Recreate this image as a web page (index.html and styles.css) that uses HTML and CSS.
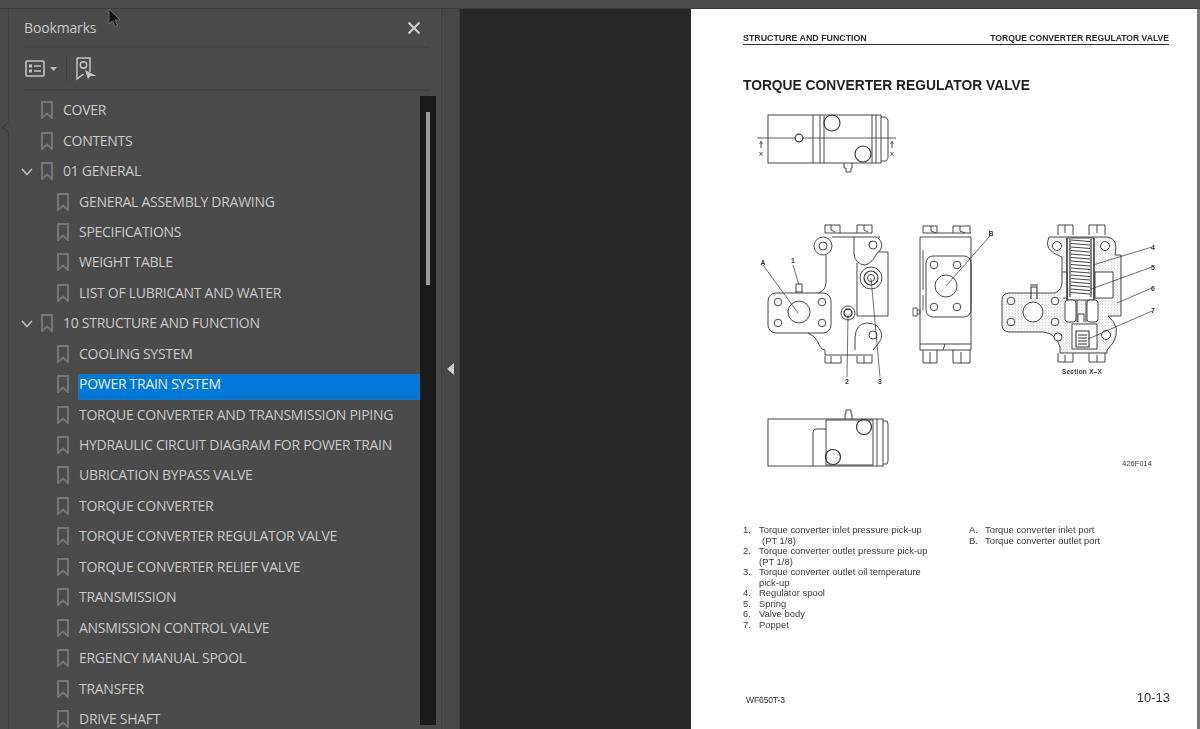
FILE: index.html
```html
<!DOCTYPE html>
<html lang="en">
<head>
<meta charset="utf-8">
<title>Bookmarks</title>
<link rel="stylesheet" href="styles.css">
</head>
<body>
<svg class="defs" width="0" height="0" aria-hidden="true">
  <symbol id="bm" viewBox="0 0 12 18"><path d="M1 1H11V17L6 12.6L1 17Z" fill="none" stroke="currentColor" stroke-width="2"/></symbol>
  <symbol id="chev" viewBox="0 0 12 8"><path d="M1 1L6 6.5L11 1" fill="none" stroke="currentColor" stroke-width="1.5"/></symbol>
</svg>
<div class="topbar"></div>
<div class="main">
  <div class="strip"><span class="notch"></span></div>
  <aside class="panel">
    <header class="panel-head">
      <span class="panel-title">Bookmarks</span>
      <svg class="close" width="14" height="14" viewBox="0 0 14 14"><path d="M1.5 1.5L12.5 12.5M12.5 1.5L1.5 12.5" stroke="#cfcfcf" stroke-width="2"/></svg>
    </header>
    <div class="toolbar">
      <svg class="tool-list" width="20" height="17" viewBox="0 0 20 17"><rect x="1" y="1" width="18" height="15" rx="1" fill="none" stroke="#c4c4c4" stroke-width="1.6"/><rect x="4" y="4.5" width="3" height="3" fill="#c4c4c4"/><rect x="4" y="9.5" width="3" height="3" fill="#c4c4c4"/><path d="M9 6H16M9 11H16" stroke="#c4c4c4" stroke-width="1.6"/></svg>
      <svg class="tool-caret" width="7" height="4" viewBox="0 0 7 4"><path d="M0 0H7L3.5 4Z" fill="#bdbdbd"/></svg>
      <span class="tool-sep"></span>
      <svg class="tool-find" width="21" height="24" viewBox="0 0 21 24"><path d="M1 1H14V15M1 1V22L7.500 17" fill="none" stroke="#c4c4c4" stroke-width="1.500"/><circle cx="7.500" cy="8" r="3.200" fill="none" stroke="#c4c4c4" stroke-width="1.500"/><path d="M9 13L12 22L14.500 19H20.500Z" fill="#c4c4c4"/></svg>
    </div>
    <div class="list-wrap">
      <ul class="tree">
        <li class="row"><svg class="bm"><use href="#bm"/></svg><span class="label">COVER</span></li>
        <li class="row"><svg class="bm"><use href="#bm"/></svg><span class="label">CONTENTS</span></li>
        <li class="row"><svg class="chev"><use href="#chev"/></svg><svg class="bm"><use href="#bm"/></svg><span class="label">01 GENERAL</span></li>
        <li class="row child"><svg class="bm"><use href="#bm"/></svg><span class="label">GENERAL ASSEMBLY DRAWING</span></li>
        <li class="row child"><svg class="bm"><use href="#bm"/></svg><span class="label">SPECIFICATIONS</span></li>
        <li class="row child"><svg class="bm"><use href="#bm"/></svg><span class="label">WEIGHT TABLE</span></li>
        <li class="row child"><svg class="bm"><use href="#bm"/></svg><span class="label">LIST OF LUBRICANT AND WATER</span></li>
        <li class="row"><svg class="chev"><use href="#chev"/></svg><svg class="bm"><use href="#bm"/></svg><span class="label">10 STRUCTURE AND FUNCTION</span></li>
        <li class="row child"><svg class="bm"><use href="#bm"/></svg><span class="label">COOLING SYSTEM</span></li>
        <li class="row child selected"><svg class="bm"><use href="#bm"/></svg><span class="label">POWER TRAIN SYSTEM</span></li>
        <li class="row child"><svg class="bm"><use href="#bm"/></svg><span class="label">TORQUE CONVERTER AND TRANSMISSION PIPING</span></li>
        <li class="row child"><svg class="bm"><use href="#bm"/></svg><span class="label">HYDRAULIC CIRCUIT DIAGRAM FOR POWER TRAIN</span></li>
        <li class="row child"><svg class="bm"><use href="#bm"/></svg><span class="label">UBRICATION BYPASS VALVE</span></li>
        <li class="row child"><svg class="bm"><use href="#bm"/></svg><span class="label">TORQUE CONVERTER</span></li>
        <li class="row child"><svg class="bm"><use href="#bm"/></svg><span class="label">TORQUE CONVERTER REGULATOR VALVE</span></li>
        <li class="row child"><svg class="bm"><use href="#bm"/></svg><span class="label">TORQUE CONVERTER RELIEF VALVE</span></li>
        <li class="row child"><svg class="bm"><use href="#bm"/></svg><span class="label">TRANSMISSION</span></li>
        <li class="row child"><svg class="bm"><use href="#bm"/></svg><span class="label">ANSMISSION CONTROL VALVE</span></li>
        <li class="row child"><svg class="bm"><use href="#bm"/></svg><span class="label">ERGENCY MANUAL SPOOL</span></li>
        <li class="row child"><svg class="bm"><use href="#bm"/></svg><span class="label">TRANSFER</span></li>
        <li class="row child"><svg class="bm"><use href="#bm"/></svg><span class="label">DRIVE SHAFT</span></li>
      </ul>
      <div class="scroll"><span class="thumb"></span></div>
    </div>
  </aside>
  <div class="splitter"><svg width="7" height="12" viewBox="0 0 7 12"><path d="M7 0V12L0 6Z" fill="#d0d0d0"/></svg></div>
  <main class="doc">
    <article class="page">
      <div class="page-head"><span>STRUCTURE AND FUNCTION</span><span>TORQUE CONVERTER REGULATOR VALVE</span></div>
      <h1 class="page-title">TORQUE CONVERTER REGULATOR VALVE</h1>
      <svg class="figure" width="506" height="378" viewBox="691 100 506 378">
        <defs>
          <pattern id="stip" width="3" height="3" patternUnits="userSpaceOnUse"><rect width="3" height="3" fill="#f5f5f5"/><rect x="1" y="1" width="1" height="1" fill="#dadada"/></pattern>
        </defs>
        <g fill="none" stroke="#333" stroke-width="0.9">
          <!-- top view -->
          <rect x="768" y="115" width="113" height="48"/>
          <path d="M881 117H886L888 120V158L886 161H881"/>
          <path d="M813 115V163M820 115V163M824 116V163M872 115V163M876 115V163"/>
          <circle cx="832" cy="123" r="8" stroke-width="1.1"/>
          <circle cx="863" cy="154" r="8" stroke-width="1.1"/>
          <circle cx="799" cy="138" r="3.800" stroke-width="1.2"/>
          <path d="M757 138H795M803 138H896" stroke-width="0.8"/>
          <path d="M761 148V142M892 148V142"/>
          <path d="M759.500 144L761 141L762.500 144M890.500 144L892 141L893.500 144" stroke-width="0.7"/>
          <path d="M844 163V168H846V172H851V168H852V163"/>
          <!-- front view -->
          <path d="M825 233V225H840V233M831 225V230L835 232M857 233V225H872V233M864 225V230L868 232"/>
          <path d="M825 233H872M832 237H880"/>
          <circle cx="823" cy="246" r="9"/>
          <circle cx="823" cy="246" r="4"/>
          <path d="M826 255V282Q826 291 818 293"/>
          <rect x="768" y="293" width="63" height="40" rx="8"/>
          <circle cx="778" cy="302" r="3.800"/><circle cx="822" cy="302" r="3.800"/>
          <circle cx="778" cy="323" r="3.800"/><circle cx="822" cy="323" r="3.800"/>
          <circle cx="799" cy="312" r="11"/>
          <path d="M796 292V284H802V292M795 292H803"/>
          <path d="M808 333Q815 336 818 342Q820 349 825 350V355H873"/>
          <path d="M825 356V363H841V356M831 356V363M857 356V363H872V356M864 356V363"/>
          <path d="M854 237V254Q855 264 865 265Q871 264 876 255L878 252H888V316H857V263"/>
          <circle cx="873" cy="245" r="4"/>
          <path d="M879 252Q885 244 878 238"/>
          <path d="M855 337Q856 324 866 323Q873 323 877 326Q886 335 878 344L873 350M855 337V350"/>
          <circle cx="873" cy="335" r="4"/>
          <circle cx="871" cy="278" r="11"/><circle cx="871" cy="278" r="7" stroke-width="1.2"/><circle cx="871" cy="278" r="3.500"/>
          <circle cx="848" cy="313" r="7"/><circle cx="848" cy="313" r="4" stroke-width="1.300"/>
          <g stroke-width="0.7">
            <path d="M763 265L798 313M793 265L799 285M848 315L847 377M871 278L880 377"/>
          </g>
          <!-- side view -->
          <path d="M923 233V226H937V233M953 233V226H970V233M931 226V231L936 233M960 226V231L965 233"/>
          <path d="M923 233H971M920 237H971V350H920Z"/>
          <path d="M920 344H971M945 344L943 350"/>
          <rect x="926" y="256" width="45" height="61" rx="7"/>
          <path d="M923 350V363H937V350M953 350V363H970V350M930 352V363M961 352V363"/>
          <circle cx="934" cy="265" r="3.800"/><circle cx="957" cy="265" r="3.800"/>
          <circle cx="934" cy="307" r="3.800"/><circle cx="957" cy="307" r="3.800"/>
          <circle cx="946" cy="286" r="11"/>
          <path d="M913 308H917V316H913ZM917 310H920V314H917M923 250V290M923 295V310" stroke-width="0.8"/>
          <path d="M946 286L990 236" stroke-width="0.7"/>
          <!-- section -->
          <path fill="url(#stip)" d="M1049 237H1107Q1119 238 1115 255H1121V316H1108Q1122 327 1113 343L1107 350V353H1060V347Q1056 333 1043 332H1010Q1002 332 1002 325V300Q1002 293 1010 293H1055Q1062 290 1062 282V257Q1042 250 1049 237Z"/>
          <path d="M1058 235V225H1073V235M1089 235V225H1105V235M1065 225V233M1097 225V233M1058 353V362H1073V353M1089 353V362H1105V353M1065 355V362M1097 355V362"/>
          <circle cx="1057" cy="246" r="4.500" fill="#fff"/><circle cx="1105" cy="246" r="4.500" fill="#fff"/>
          <circle cx="1011" cy="301" r="3.800" fill="#fff"/><circle cx="1011" cy="322" r="3.800" fill="#fff"/>
          <circle cx="1055" cy="301" r="3.800" fill="#fff"/><circle cx="1055" cy="322" r="3.800" fill="#fff"/>
          <circle cx="1033" cy="312" r="10" fill="#fff"/>
          <circle cx="1058" cy="337" r="4" fill="#fff"/><circle cx="1106" cy="335" r="4.500" fill="#fff"/>
          <path d="M1031 299V287H1037V299M1030 285H1038" stroke-width="1.100"/>
          <path fill="#fff" d="M1067 238H1094V300H1067ZM1095 272H1113V298H1095Z"/>
          <rect x="1065" y="300" width="11" height="22" rx="3" fill="#fff"/>
          <rect x="1087" y="300" width="11" height="22" rx="3" fill="#fff"/>
          <path d="M1077 300V322M1086 300V322"/>
          <path d="M1078 322V314H1084V322" fill="#fff"/>
          <rect x="1072" y="324" width="25" height="25" fill="#fff"/>
          <path d="M1063 272H1067V298H1063" fill="#fff"/>
          <path stroke="#444" stroke-width="1" d="M1071 240L1090 241.500M1071 243.500L1090 245M1071 247L1090 248.500M1071 250.500L1090 252M1071 254L1090 255.500M1071 257.500L1090 259M1071 261L1090 262.500M1071 264.500L1090 266M1071 268L1090 269.500M1071 271.500L1090 273M1071 275L1090 276.500M1071 278.500L1090 280M1071 282L1090 283.500M1071 285.500L1090 287M1071 289L1090 290.500M1071 292.500L1090 294"/>
          <path d="M1070 239V297M1091 239V297M1067 238V300M1094 238V300" stroke-width="1.200"/>
          <path stroke-width="1.100" d="M1076 331H1089V347H1076ZM1078 335H1087M1078 338H1087M1078 341H1087M1078 344H1087"/>
          <path d="M1093 265L1152 247M1091 289L1152 267M1117 303L1152 288M1088 339L1152 311" stroke-width="0.7"/>
          <!-- bottom view -->
          <rect x="768" y="419" width="115" height="47" fill="#fff"/>
          <path d="M883 421H887L888 424V461L887 464H883"/>
          <rect x="826" y="420" width="47" height="45"/>
          <path d="M877 419V466M813 466V432Q813 429 816 429H826"/>
          <circle cx="864" cy="427" r="7.500" stroke-width="1.200"/>
          <circle cx="833" cy="457" r="7.500" stroke-width="1.200"/>
          <path d="M845 419V414H846V410H851V414H852V419"/>
        </g>
        <g class="fig-label">
          <text x="763" y="265" text-anchor="middle">A</text>
          <text x="793" y="263" text-anchor="middle">1</text>
          <text x="847" y="384" text-anchor="middle">2</text>
          <text x="880" y="384" text-anchor="middle">3</text>
          <text x="991" y="236" text-anchor="middle">B</text>
          <text x="1153" y="250" text-anchor="middle">4</text>
          <text x="1153" y="270" text-anchor="middle">5</text>
          <text x="1153" y="291" text-anchor="middle">6</text>
          <text x="1153" y="313" text-anchor="middle">7</text>
          <text x="761" y="156" text-anchor="middle" class="thin">x</text>
          <text x="892" y="156" text-anchor="middle" class="thin">x</text>
          <text x="1082" y="374" text-anchor="middle" class="sect">Section X–X</text>
          <text x="1152" y="465.500" text-anchor="end" class="code">426F014</text>
        </g>
      </svg>
      <div class="legend">
        <ol class="parts">
          <li><span>1.</span><span>Torque converter inlet pressure pick-up<br><span class="nudge">(PT 1/8)</span></span></li>
          <li><span>2.</span><span>Torque converter outlet pressure pick-up<br>(PT 1/8)</span></li>
          <li><span>3.</span><span>Torque converter outlet oil temperature<br>pick-up</span></li>
          <li><span>4.</span><span>Regulator spool</span></li>
          <li><span>5.</span><span>Spring</span></li>
          <li><span>6.</span><span>Valve body</span></li>
          <li><span>7.</span><span>Poppet</span></li>
        </ol>
        <ol class="parts ports">
          <li><span>A.</span><span>Torque converter inlet port</span></li>
          <li><span>B.</span><span>Torque converter outlet port</span></li>
        </ol>
      </div>
      <div class="page-foot"><span class="model">WF650T-3</span><span class="pageno">10-13</span></div>
    </article>
    <div class="edge"></div>
  </main>
</div>
<svg class="cursor" width="14" height="20" viewBox="0 0 14 20"><path d="M1 1V16L4.500 12.800L7 18.500L9.500 17.500L7 12H12Z" fill="#111" stroke="#777" stroke-width="0.8"/></svg>
</body>
</html>
```
FILE: styles.css
```css
* { box-sizing: border-box; }
html, body { margin: 0; padding: 0; height: 100%; }
body {
  width: 1200px;
  height: 729px;
  overflow: hidden;
  background: #4b4b4b;
  font-family: "Open Sans", "Noto Sans", sans-serif;
  display: flex;
  flex-direction: column;
  position: relative;
}
.defs { position: absolute; }
.topbar { height: 9px; flex: none; background: #4d4d4d; border-bottom: 1px solid #3b3b3b; }
.main { flex: 1; display: flex; min-height: 0; }

.strip { width: 9px; flex: none; background: #4a4a4a; border-right: 1px solid #3f3f3f; position: relative; }
.notch {
  position: absolute; left: 4px; top: 114px; width: 8px; height: 8px;
  background: #4b4b4b; border-left: 1px solid #3f3f3f; border-bottom: 1px solid #3f3f3f;
  transform: rotate(45deg);
}

.panel { width: 432px; flex: none; background: #4b4b4b; display: flex; flex-direction: column; min-height: 0; }
.panel-head {
  height: 39px; flex: none; margin: 0 12px 0 15px;
  display: flex; align-items: center; justify-content: space-between;
  padding: 0 8px 0 0;
  border-bottom: 2px solid #434343;
}
.panel-title { font-size: 14px; color: #c8c8c8; letter-spacing: -0.15px; }
.toolbar {
  height: 43px; flex: none; margin: 0 12px 0 15px;
  display: flex; align-items: center;
  padding: 0 0 0 1px;
  border-bottom: 2px solid #434343;
}
.tool-caret { margin-left: 5px; }
.tool-sep { width: 1px; height: 26px; background: #414141; margin: 0 9px 0 9px; }
.list-wrap { flex: 1; display: flex; min-height: 0; padding: 4px 5px 0 0; }
.tree { list-style: none; margin: 0; padding: 0; flex: 1; min-width: 0; overflow: hidden; }
.scroll { width: 16px; flex: none; background: #1a1a1a; padding: 16px 6px 0; margin: 1px 0 4px; }
.thumb { display: block; width: 4px; height: 173px; background: #9a9a9a; }

.row {
  height: 30.45px; display: flex; align-items: center;
  padding-left: 32px; position: relative;
  color: #c9c9c9; font-size: 14px; white-space: nowrap;
}
.row.child { padding-left: 48px; }
.bm { width: 12px; height: 18px; color: #757575; flex: none; }
.chev { position: absolute; left: 12px; top: 12px; width: 12px; height: 8px; color: #c0c0c0; }
.label { margin: 6px 0 0 10px; letter-spacing: -0.28px; flex: 1; min-width: 0; line-height: 20px; padding: 0 0 6px; }
.selected .label {
  background: #0078d7; color: #e6f1fa; outline: 1px dotted #3f6f97; outline-offset: -1px;
  margin-left: 9px; padding-left: 1px;
}

.splitter {
  width: 19px; flex: none; background: #464646; border-left: 1px solid #404040;
  display: flex; align-items: center; justify-content: flex-start; padding: 0 0 0 5px;
  border-right: 1px solid #3d3d3d;
}
.doc { flex: 1; min-width: 0; background: #282828; display: flex; justify-content: flex-end; }
.page {
  width: 506px; flex: none; background: #fff; color: #2b2b2b;
  font-family: "Liberation Sans", Arial, sans-serif;
  padding: 24px 0 0 52px;
  display: flex; flex-direction: column;
  filter: blur(0.4px);
  overflow: hidden;
}
.edge { width: 3px; flex: none; background: #777; }
.page-head {
  width: 426px; display: flex; justify-content: space-between; flex: none;
  font-size: 8.83px; font-weight: 700; line-height: 11px;
  border-bottom: 1.4px solid #333;
}
.page-head span + span { font-size: 8.6px; }
.page-title { margin: 31.6px 0 0; font-size: 13.8px; line-height: 18px; font-weight: 700; color: #222; flex: none; }
.figure { display: block; margin: 5px 0 0 -52px; flex: none; }
.fig-label text { font-family: "Liberation Sans", Arial, sans-serif; font-size: 7px; font-weight: 700; fill: #333; }
.fig-label .thin { font-weight: 400; font-size: 8px; }
.fig-label .sect { font-size: 6.4px; letter-spacing: 0.3px; }
.fig-label .code { font-weight: 400; font-size: 7.2px; letter-spacing: 0.2px; }

.legend { display: flex; flex: none; margin-top: 47.75px; height: 118px; font-size: 9.4px; line-height: 10.5px; color: #3a3a3a; letter-spacing: 0.02px; }
.parts { list-style: none; margin: 0; padding: 0; width: 226px; }
.parts li { display: flex; }
.parts li > span:first-child { width: 16px; flex: none; }
.nudge { margin-left: 3px; }
.page-foot { width: 427px; display: flex; flex: none; justify-content: space-between; align-items: center; margin-top: 46.75px; padding-left: 3px; color: #333; }
.model { font-size: 8.6px; letter-spacing: -0.15px; margin-top: 4px; }
.pageno { font-size: 13px; }
.cursor { position: absolute; left: 108px; top: 8px; }
```
